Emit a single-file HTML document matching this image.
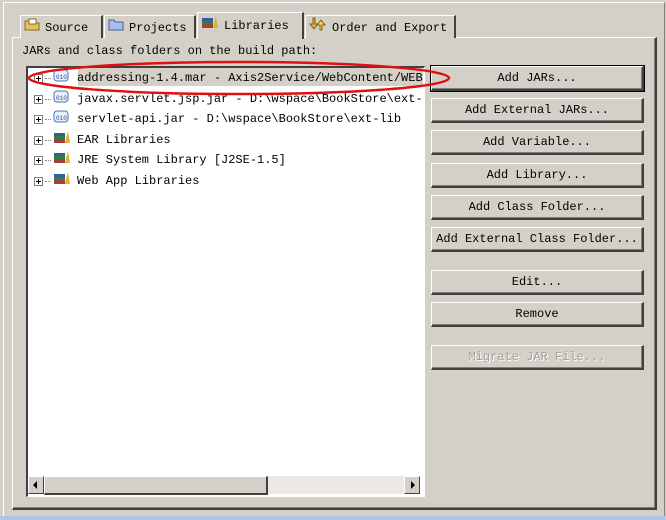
<!DOCTYPE html>
<html><head><style>
body{margin:0;width:666px;height:520px;background:#d4d0c8;position:relative;overflow:hidden;font-family:"Liberation Mono","Noto Sans CJK SC",monospace;font-size:12px;color:#000}
.a{position:absolute}
.outer{left:3px;top:2px;width:660px;height:514px;border-top:1px solid #fff;border-left:1px solid #fff;border-right:1px solid #808080}
.panel{left:12px;top:37px;width:642px;height:470px;border-top:1px solid #fff;border-left:1px solid #fff;border-right:2px solid #404040;border-bottom:2px solid #404040;box-shadow:inset -1px -1px 0 #808080}
.tab{top:15px;height:22px;border-top:1px solid #fff;border-left:1px solid #fff;border-right:2px solid #404040;background:#d4d0c8;line-height:24px;font-size:12px;white-space:nowrap;overflow:hidden}
.tab.sel{top:12px;height:26px;z-index:2;border-bottom:none;line-height:26px}
.ic{display:inline-block;vertical-align:middle;margin:0 5px 0 3px}
.tree{left:26px;top:66px;width:396px;height:428px;background:#fff;border-top:2px solid #404040;border-left:2px solid #404040;border-right:1px solid #fff;border-bottom:1px solid #fff;overflow:hidden}
.row{position:absolute;left:6px;height:18px;line-height:18px;white-space:nowrap}
.pl{display:inline-block;width:7px;height:7px;border:1px solid #808080;vertical-align:middle;position:relative;background:#fff;margin-right:2px}
.pl:before{content:"";position:absolute;left:1px;top:3px;width:5px;height:1px;background:#000}
.pl:after{content:"";position:absolute;left:3px;top:1px;width:1px;height:5px;background:#000}
.dot{display:inline-block;width:6px;border-top:1px dotted #808080;vertical-align:middle}
.btn{left:431px;width:210px;height:22px;border-top:1px solid #fff;border-left:1px solid #fff;border-right:2px solid #404040;border-bottom:2px solid #404040;box-shadow:inset -1px -1px 0 #808080;text-align:center;line-height:22px}
.sb{left:28px;top:476px;width:392px;height:18px;background:#ece9e2}
</style></head><body>
<div class="a outer"></div>
<div class="a panel"></div>
<div class="a tab" style="left:20px;width:80px"><span class="ic"><svg width="16" height="14"><path d="M1 4h5l1 2h8v7H1z" fill="#e8c060" stroke="#8a6a20"/><path d="M5 2h7v5H5z" fill="#fff" stroke="#8a6a20"/></svg></span>Source</div>
<div class="a tab" style="left:104px;width:89px"><span class="ic"><svg width="16" height="14"><path d="M1 3h5l1 2h8v8H1z" fill="#a8c0e8" stroke="#4060a0"/></svg></span>Projects</div>
<div class="a tab sel" style="left:197px;width:104px"><span class="ic"><svg width="18" height="14"><rect x="1" y="3" width="11" height="3" fill="#3060a0"/><rect x="1" y="6" width="11" height="3" fill="#308040"/><rect x="1" y="9" width="11" height="4" fill="#a04040"/><path d="M12 13l3-12 2 12z" fill="#e0b030"/></svg></span>Libraries</div>
<div class="a tab" style="left:305px;width:148px"><span class="ic"><svg width="18" height="14"><path d="M4 1v6H1l4 5 4-5H6V1z" fill="#e0b030" stroke="#806010"/><path d="M13 13V8h3l-4-5-4 5h3v5z" fill="#f0d060" stroke="#806010"/></svg></span>Order and Export</div>
<div class="a" style="left:22px;top:44px">JARs and class folders on the build path:</div>
<div class="a tree">
<div class="row" style="top:0px;background:#d4d0c8;left:50px;width:345px"></div>
<div class="row" style="top:0px"><span class="pl"></span><span class="dot"></span><span class="ic" style="margin:0 8px 0 2px"><svg width="16" height="14"><rect x="1" y="2" width="14" height="11" rx="3" fill="#e8f0fa" stroke="#5070b0"/><text x="3" y="11" font-size="6" fill="#3050a0" font-family="Liberation Mono">010</text></svg></span>addressing-1.4.mar - Axis2Service/WebContent/WEB</div>
<div class="row" style="top:21px"><span class="pl"></span><span class="dot"></span><span class="ic" style="margin:0 8px 0 2px"><svg width="16" height="14"><rect x="1" y="2" width="14" height="11" rx="3" fill="#e8f0fa" stroke="#5070b0"/><text x="3" y="11" font-size="6" fill="#3050a0" font-family="Liberation Mono">010</text></svg></span>javax.servlet.jsp.jar - D:\wspace\BookStore\ext-l</div>
<div class="row" style="top:41px"><span class="pl"></span><span class="dot"></span><span class="ic" style="margin:0 8px 0 2px"><svg width="16" height="14"><rect x="1" y="2" width="14" height="11" rx="3" fill="#e8f0fa" stroke="#5070b0"/><text x="3" y="11" font-size="6" fill="#3050a0" font-family="Liberation Mono">010</text></svg></span>servlet-api.jar - D:\wspace\BookStore\ext-lib</div>
<div class="row" style="top:62px"><span class="pl"></span><span class="dot"></span><span class="ic" style="margin:0 6px 0 2px"><svg width="18" height="14"><rect x="1" y="3" width="11" height="3" fill="#3060a0"/><rect x="1" y="6" width="11" height="3" fill="#308040"/><rect x="1" y="9" width="11" height="4" fill="#a04040"/><path d="M12 13l3-12 2 12z" fill="#e0b030"/></svg></span>EAR Libraries</div>
<div class="row" style="top:82px"><span class="pl"></span><span class="dot"></span><span class="ic" style="margin:0 6px 0 2px"><svg width="18" height="14"><rect x="1" y="3" width="11" height="3" fill="#3060a0"/><rect x="1" y="6" width="11" height="3" fill="#308040"/><rect x="1" y="9" width="11" height="4" fill="#a04040"/><path d="M12 13l3-12 2 12z" fill="#e0b030"/></svg></span>JRE System Library [J2SE-1.5]</div>
<div class="row" style="top:103px"><span class="pl"></span><span class="dot"></span><span class="ic" style="margin:0 6px 0 2px"><svg width="18" height="14"><rect x="1" y="3" width="11" height="3" fill="#3060a0"/><rect x="1" y="6" width="11" height="3" fill="#308040"/><rect x="1" y="9" width="11" height="4" fill="#a04040"/><path d="M12 13l3-12 2 12z" fill="#e0b030"/></svg></span>Web App Libraries</div>
</div>
<div class="a sb"></div>
<div class="a" style="left:28px;top:476px;width:14px;height:16px;background:#d4d0c8;border-right:1px solid #404040;border-bottom:1px solid #404040;border-top:1px solid #fff;border-left:1px solid #fff"><svg width="14" height="16"><path d="M8 4v8L4 8z"/></svg></div>
<div class="a" style="left:44px;top:476px;width:221px;height:16px;background:#d4d0c8;border-right:2px solid #404040;border-bottom:2px solid #404040;border-top:1px solid #fff;border-left:1px solid #fff"></div>
<div class="a" style="left:404px;top:476px;width:14px;height:16px;background:#d4d0c8;border-right:1px solid #404040;border-bottom:1px solid #404040;border-top:1px solid #fff;border-left:1px solid #fff"><svg width="14" height="16"><path d="M6 4v8l4-4z"/></svg></div>
<div class="a btn" style="top:66px;outline:1px solid #000">Add JARs...</div>
<div class="a btn" style="top:98px">Add External JARs...</div>
<div class="a btn" style="top:130px">Add Variable...</div>
<div class="a btn" style="top:163px">Add Library...</div>
<div class="a btn" style="top:195px">Add Class Folder...</div>
<div class="a btn" style="top:227px">Add External Class Folder...</div>
<div class="a btn" style="top:270px">Edit...</div>
<div class="a btn" style="top:302px">Remove</div>
<div class="a btn" style="top:345px;color:#a0a0a0;text-shadow:1px 1px 0 #fff">Migrate JAR File...</div>
<svg class="a" style="left:0;top:0" width="666" height="520"><ellipse cx="239" cy="78" rx="210" ry="16" fill="none" stroke="#e01010" stroke-width="2.5"/></svg>
<div class="a" style="left:0;top:516px;width:666px;height:4px;background:#a8c8e8"></div>
</body></html>
